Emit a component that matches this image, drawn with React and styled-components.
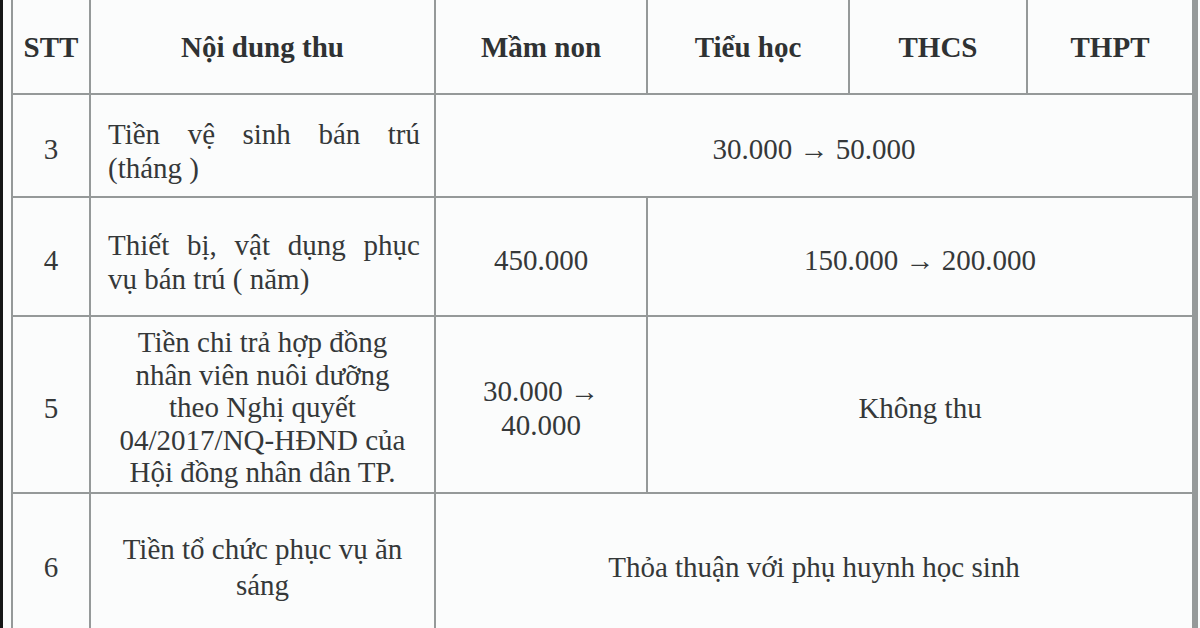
import React from 'react';
import styled, { createGlobalStyle } from 'styled-components';

const GlobalStyle = createGlobalStyle`
  html, body {
    margin: 0;
    padding: 0;
    background: #fafcfc;
    overflow: hidden;
  }
`;

const Page = styled.div`
  width: 1200px;
  height: 628px;
  overflow: hidden;
  box-sizing: border-box;
  border-left: 3px solid #151717;
  padding-left: 8px;
  background: #fafcfc;
  font-family: "Liberation Serif", "Times New Roman", serif;
  color: #353839;
`;

const Table = styled.div`
  display: grid;
  width: 1183px;
  grid-template-columns: 76px 343px 210px 200px 176px 164px;
  grid-template-rows: 93px 101px 117px 175px 140px;
  gap: 2px;
  padding: 0 2px 2px 2px;
  background: #959999;
`;

const Cell = styled.div`
  background: #fbfcfc;
  grid-column: ${(p) => p.$span || 'auto'};
  display: flex;
  flex-direction: column;
  justify-content: center;
  align-items: ${(p) => (p.$left ? 'stretch' : 'center')};
  text-align: center;
  padding: ${(p) => (p.$left ? '10px 14px 0 17px' : '6px 6px 0 6px')};
  font-size: 29px;
  line-height: ${(p) => p.$lh || '34px'};
  box-sizing: border-box;
`;

const HeadCell = styled(Cell)`
  font-weight: bold;
  padding-top: 0;
  color: #2f3233;
`;

const Justified = styled.div`
  text-align: justify;
  text-align-last: justify;
`;

const Plain = styled.div`
  text-align: left;
`;

const headers = ['STT', 'Nội dung thu', 'Mầm non', 'Tiểu học', 'THCS', 'THPT'];

export default function App() {
  return (
    <Page>
      <GlobalStyle />
      <Table>
        {headers.map((h) => (
          <HeadCell key={h}>{h}</HeadCell>
        ))}

        <Cell>3</Cell>
        <Cell $left>
          <Justified>Tiền vệ sinh bán trú</Justified>
          <Plain>(tháng )</Plain>
        </Cell>
        <Cell $span="3 / span 4">30.000 → 50.000</Cell>

        <Cell>4</Cell>
        <Cell $left>
          <Justified>Thiết bị, vật dụng phục</Justified>
          <Plain>vụ bán trú ( năm)</Plain>
        </Cell>
        <Cell>450.000</Cell>
        <Cell $span="4 / span 3">150.000 → 200.000</Cell>

        <Cell>5</Cell>
        <Cell $lh="32.5px">
          Tiền chi trả hợp đồng<br />
          nhân viên nuôi dưỡng<br />
          theo Nghị quyết<br />
          04/2017/NQ-HĐND của<br />
          Hội đồng nhân dân TP.
        </Cell>
        <Cell>
          30.000 →<br />
          40.000
        </Cell>
        <Cell $span="4 / span 3">Không thu</Cell>

        <Cell>6</Cell>
        <Cell $lh="36px">
          Tiền tổ chức phục vụ ăn<br />
          sáng
        </Cell>
        <Cell $span="3 / span 4">Thỏa thuận với phụ huynh học sinh</Cell>
      </Table>
    </Page>
  );
}
